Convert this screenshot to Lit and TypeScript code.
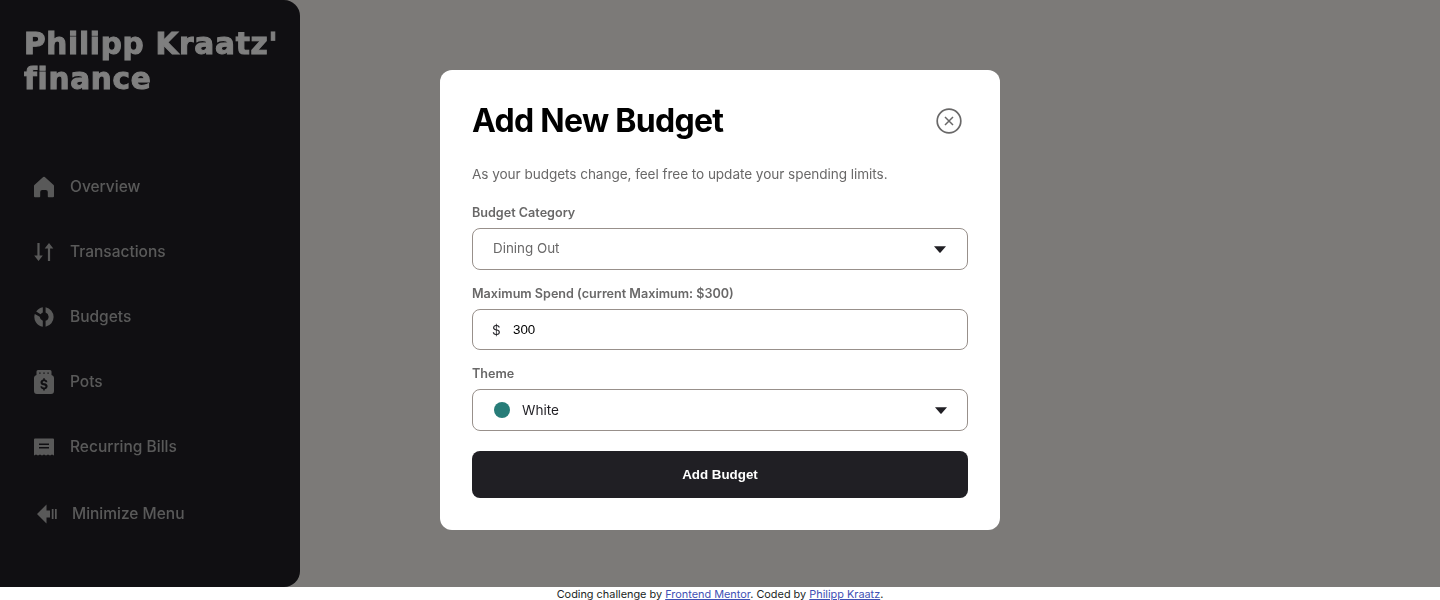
import {LitElement, css, html, svg} from 'lit';
import {customElement} from 'lit/decorators.js';

const NAV = [
  {
    label: 'Overview',
    icon: svg`<path d="M21 11v10.3a1 1 0 0 1-1 1h-4.5a.7.7 0 0 1-.7-.7V17a2 2 0 0 0-2-2H9.2a2 2 0 0 0-2 2v4.6a.7.7 0 0 1-.7.7H2a1 1 0 0 1-1-1V11a1.2 1.2 0 0 1 .4-.9L10.2 2a1.2 1.2 0 0 1 1.6 0l8.8 8.1a1.2 1.2 0 0 1 .4.9Z"/>`,
  },
  {
    label: 'Transactions',
    icon: svg`<path d="M4.400 3h2.200v12.500h3.200L5.500 21 1.200 15.500h3.200V3Z"/><path d="M16 3l4.300 5.500h-3.200V21h-2.200V8.500h-3.200L16 3Z"/>`,
  },
  {
    label: 'Budgets',
    icon: svg`<path d="M12.600 2.200a10 10 0 0 1 0 19.600v-6a4.400 4.400 0 0 0 3-4.300 4.500 4.500 0 0 0-3-3.900V2.200Z"/><path d="M9.800 2.200v5.400a4.400 4.400 0 0 0-2.200 1.700L3.200 6.500a10 10 0 0 1 6.600-4.300Z"/><path d="M1.800 9l4.900 2.800a4.500 4.500 0 0 0 3.100 3.900v6.100A10 10 0 0 1 1.800 9Z"/>`,
  },
  {
    label: 'Pots',
    icon: svg`<path fill-rule="evenodd" d="M5 0h12a1.500 1.500 0 0 1 1.500 1.500V5A3 3 0 0 1 21 7.800V21a3 3 0 0 1-3 3H4a3 3 0 0 1-3-3V7.800A3 3 0 0 1 3.500 5V1.500A1.500 1.500 0 0 1 5 0ZM6.200 2.400v1.400h1.400V2.400H6.200Zm4.100 0v1.400h1.400V2.400h-1.400Zm4.100 0v1.400h1.400V2.400h-1.400ZM10.200 8.200v1.300c-1.600.3-2.700 1.400-2.700 2.900 0 1.700 1.300 2.500 3 2.800 1.300.3 1.900.6 1.900 1.200 0 .6-.6 1-1.500 1-1 0-1.600-.4-1.700-1.200H7.400c.1 1.700 1.200 2.700 2.800 3v1.300h1.600v-1.300c1.700-.3 2.800-1.400 2.800-3 0-1.800-1.400-2.500-3-2.900-1.200-.3-1.900-.5-1.900-1.100 0-.6.6-1 1.400-1 .8 0 1.400.4 1.500 1.100h1.800c-.1-1.600-1.100-2.600-2.600-2.800V8.200h-1.600Z"/>`,
  },
  {
    label: 'Recurring Bills',
    icon: svg`<path fill-rule="evenodd" d="M2 3.500h18a1 1 0 0 1 1 1v16l-2-.9-2 .9-2-.9-2 .9-2-.9-2 .9-2-.9-2 .9-2-.9-2 .9v-16a1 1 0 0 1 1-1Zm4 5v1.500h10V8.500H6Zm0 3.500v1.500h10V12H6Z"/>`,
  },
];

const MINIMIZE = svg`<path d="M10.500 1.500v6H14v7h-3.500v6L1 11l9.500-9.500Z"/><rect x="15.800" y="6" width="1.700" height="10"/><rect x="19" y="6" width="1.700" height="10"/>`;

const CARET = html`<svg class="caret" viewBox="0 0 12 7" width="12" height="7" aria-hidden="true"><path d="M0 .2h12L6.600 6.400a.8.8 0 0 1-1.200 0L0 .2Z"/></svg>`;

@customElement('app-root')
export class AppRoot extends LitElement {
  static styles = css`
    :host {
      display: block;
      position: relative;
      height: 600px;
      overflow: hidden;
      background: #fff;
      font-family: Inter, 'Noto Sans', sans-serif;
    }

    .page {
      display: flex;
      height: 587px;
      background: #f8f4f0;
      will-change: transform;
    }

    .sidebar {
      display: flex;
      flex-direction: column;
      width: 300px;
      box-sizing: border-box;
      padding: 27px 0 0 24px;
      background: #201f24;
      border-radius: 0 16px 16px 0;
    }

    .brand {
      margin: 0;
      width: 270px;
      font-family: 'DejaVu Sans', sans-serif;
      font-size: 29.5px;
      font-weight: 700;
      line-height: 35px;
      letter-spacing: 0.75px;
      color: #fff;
      -webkit-text-stroke: 1px #fff;
    }

    .nav {
      display: flex;
      flex-direction: column;
      margin-top: 57px;
    }

    .nav-item {
      display: flex;
      align-items: center;
      gap: 15px;
      height: 65px;
      padding-left: 9px;
      font-size: 15.5px;
      font-weight: 500;
      color: #b3b3b3;
    }

    .nav-item svg {
      width: 22px;
      height: 24px;
      fill: #b3b3b3;
      flex: none;
    }

    .nav-item.minimize {
      height: 69px;
      padding-left: 12px;
    }

    .nav-item.minimize svg {
      width: 21px;
      height: 22px;
    }

    .scrim {
      position: absolute;
      left: 0;
      top: 0;
      right: 0;
      height: 587px;
      background: rgba(0, 0, 0, 0.5);
    }

    .layer {
      position: absolute;
      inset: 0;
      display: flex;
      align-items: center;
      justify-content: center;
      will-change: transform;
    }

    .modal {
      display: flex;
      flex-direction: column;
      width: 560px;
      height: 460px;
      box-sizing: border-box;
      padding: 32px;
      background: #fff;
      border-radius: 12px;
    }

    .modal-head {
      display: flex;
      align-items: center;
      justify-content: space-between;
      height: 38px;
    }

    .modal-head h2 {
      margin: 0;
      font-size: 32px;
      font-weight: 700;
      line-height: 38px;
      letter-spacing: -0.7px;
      color: #000;
    }

    .close {
      display: block;
      margin-right: 6px;
    }

    .intro {
      margin: 24px 0 0;
      font-size: 13.6px;
      line-height: 20px;
      letter-spacing: -0.06px;
      color: #696868;
    }

    .label {
      margin-top: 19px;
      font-size: 12.6px;
      font-weight: 600;
      line-height: 20px;
      color: #696868;
    }

    .label.spend,
    .label.theme {
      margin-top: 14px;
    }

    .field {
      display: flex;
      align-items: center;
      height: 42px;
      margin-top: 5px;
      box-sizing: border-box;
      padding: 0 21px 0 20px;
      border: 1px solid #98908b;
      border-radius: 8px;
      font-size: 13.6px;
      color: #201f24;
    }

    .field.amount {
      height: 41px;
    }

    .field.theme-field {
      padding-right: 20px;
    }

    .value-muted {
      flex: 1;
      padding-bottom: 2px;
      font-size: 13.4px;
      color: #696868;
    }

    .currency {
      width: 21px;
      margin-left: -1px;
      font-size: 13.5px;
      color: #201f24;
    }

    .amount-value {
      font-family: 'Liberation Sans', Arial, sans-serif;
      font-size: 13.33px;
      color: #000;
    }

    .dot {
      width: 16px;
      height: 16px;
      margin-left: 1px;
      border-radius: 50%;
      background: #277c78;
      flex: none;
    }

    .theme-name {
      flex: 1;
      margin-left: 12px;
    }

    .caret {
      fill: #201f24;
      flex: none;
    }

    .submit {
      display: block;
      width: 100%;
      height: 47px;
      margin-top: 20px;
      padding: 0;
      border: 0;
      border-radius: 8px;
      background: #201f24;
      color: #fff;
      font-family: 'Liberation Sans', Arial, sans-serif;
      font-size: 13.33px;
      font-weight: 700;
    }

    .footer {
      height: 13px;
      font-size: 10.9px;
      line-height: 14px;
      text-align: center;
      color: #201f24;
    }

    .footer a {
      color: #3f51b5;
    }
  `;

  render() {
    return html`
      <div class="page">
        <aside class="sidebar">
          <h1 class="brand">Philipp Kraatz' finance</h1>
          <nav class="nav">
            ${NAV.map(
              (item) => html`
                <div class="nav-item">
                  <svg viewBox="0 0 22 24" aria-hidden="true">${item.icon}</svg>
                  <span>${item.label}</span>
                </div>
              `
            )}
            <div class="nav-item minimize">
              <svg viewBox="0 0 21 22" aria-hidden="true">${MINIMIZE}</svg>
              <span>Minimize Menu</span>
            </div>
          </nav>
        </aside>
      </div>
      <footer class="footer">
        Coding challenge by <a href="#">Frontend Mentor</a>. Coded by
        <a href="#">Philipp Kraatz</a>.
      </footer>
      <div class="scrim"></div>
      <div class="layer">
        <section class="modal">
          <div class="modal-head">
            <h2>Add New Budget</h2>
            <svg class="close" viewBox="0 0 26 26" width="26" height="26" fill="none" stroke="#696868" aria-hidden="true">
              <circle cx="13" cy="13" r="11.8" stroke-width="1.700"/>
              <path d="M9 9l8 8M17 9l-8 8" stroke-width="1.500"/>
            </svg>
          </div>
          <p class="intro">As your budgets change, feel free to update your spending limits.</p>
          <div class="label">Budget Category</div>
          <div class="field">
            <span class="value-muted">Dining Out</span>
            ${CARET}
          </div>
          <div class="label spend">Maximum Spend (current Maximum: $300)</div>
          <div class="field amount">
            <span class="currency">$</span>
            <span class="amount-value">300</span>
          </div>
          <div class="label theme">Theme</div>
          <div class="field theme-field">
            <span class="dot"></span>
            <span class="theme-name">White</span>
            ${CARET}
          </div>
          <button class="submit">Add Budget</button>
        </section>
      </div>
    `;
  }
}
